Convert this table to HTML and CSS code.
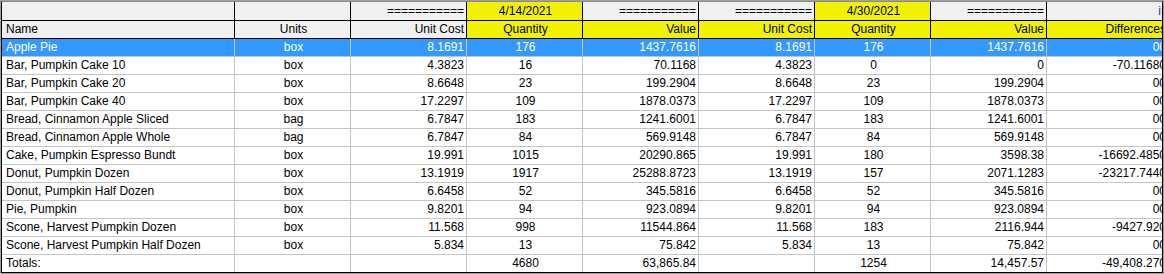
FILE: index.html
```html
<!DOCTYPE html>
<html>
<head>
<meta charset="utf-8">
<link rel="stylesheet" href="styles.css">
</head>
<body>
<div class="frame">
<div class="inner">
  <div class="row head head1">
    <div class="cell"></div>
    <div class="cell"></div>
    <div class="cell r">===========</div>
    <div class="cell m y">4/14/2021</div>
    <div class="cell r">===========</div>
    <div class="cell r">===========</div>
    <div class="cell m y">4/30/2021</div>
    <div class="cell r">===========</div>
    <div class="cell r dh">i</div>
  </div>
  <div class="row head">
    <div class="cell">Name</div>
    <div class="cell m">Units</div>
    <div class="cell r">Unit Cost</div>
    <div class="cell m y">Quantity</div>
    <div class="cell r y">Value</div>
    <div class="cell r y">Unit Cost</div>
    <div class="cell m y">Quantity</div>
    <div class="cell r y">Value</div>
    <div class="cell r y">Differences</div>
  </div>
  <div class="row sel">
    <div class="cell">Apple Pie</div><div class="cell m">box</div><div class="cell r">8.1691</div><div class="cell m">176</div><div class="cell r">1437.7616</div><div class="cell r">8.1691</div><div class="cell m">176</div><div class="cell r">1437.7616</div><div class="cell r">00</div>
  </div>
  <div class="row">
    <div class="cell">Bar, Pumpkin Cake 10</div><div class="cell m">box</div><div class="cell r">4.3823</div><div class="cell m">16</div><div class="cell r">70.1168</div><div class="cell r">4.3823</div><div class="cell m">0</div><div class="cell r">0</div><div class="cell r">-70.11680</div>
  </div>
  <div class="row">
    <div class="cell">Bar, Pumpkin Cake 20</div><div class="cell m">box</div><div class="cell r">8.6648</div><div class="cell m">23</div><div class="cell r">199.2904</div><div class="cell r">8.6648</div><div class="cell m">23</div><div class="cell r">199.2904</div><div class="cell r">00</div>
  </div>
  <div class="row">
    <div class="cell">Bar, Pumpkin Cake 40</div><div class="cell m">box</div><div class="cell r">17.2297</div><div class="cell m">109</div><div class="cell r">1878.0373</div><div class="cell r">17.2297</div><div class="cell m">109</div><div class="cell r">1878.0373</div><div class="cell r">00</div>
  </div>
  <div class="row">
    <div class="cell">Bread, Cinnamon Apple Sliced</div><div class="cell m">bag</div><div class="cell r">6.7847</div><div class="cell m">183</div><div class="cell r">1241.6001</div><div class="cell r">6.7847</div><div class="cell m">183</div><div class="cell r">1241.6001</div><div class="cell r">00</div>
  </div>
  <div class="row">
    <div class="cell">Bread, Cinnamon Apple Whole</div><div class="cell m">bag</div><div class="cell r">6.7847</div><div class="cell m">84</div><div class="cell r">569.9148</div><div class="cell r">6.7847</div><div class="cell m">84</div><div class="cell r">569.9148</div><div class="cell r">00</div>
  </div>
  <div class="row">
    <div class="cell">Cake, Pumpkin Espresso Bundt</div><div class="cell m">box</div><div class="cell r">19.991</div><div class="cell m">1015</div><div class="cell r">20290.865</div><div class="cell r">19.991</div><div class="cell m">180</div><div class="cell r">3598.38</div><div class="cell r">-16692.4850</div>
  </div>
  <div class="row">
    <div class="cell">Donut, Pumpkin Dozen</div><div class="cell m">box</div><div class="cell r">13.1919</div><div class="cell m">1917</div><div class="cell r">25288.8723</div><div class="cell r">13.1919</div><div class="cell m">157</div><div class="cell r">2071.1283</div><div class="cell r">-23217.7440</div>
  </div>
  <div class="row">
    <div class="cell">Donut, Pumpkin Half Dozen</div><div class="cell m">box</div><div class="cell r">6.6458</div><div class="cell m">52</div><div class="cell r">345.5816</div><div class="cell r">6.6458</div><div class="cell m">52</div><div class="cell r">345.5816</div><div class="cell r">00</div>
  </div>
  <div class="row">
    <div class="cell">Pie, Pumpkin</div><div class="cell m">box</div><div class="cell r">9.8201</div><div class="cell m">94</div><div class="cell r">923.0894</div><div class="cell r">9.8201</div><div class="cell m">94</div><div class="cell r">923.0894</div><div class="cell r">00</div>
  </div>
  <div class="row">
    <div class="cell">Scone, Harvest Pumpkin Dozen</div><div class="cell m">box</div><div class="cell r">11.568</div><div class="cell m">998</div><div class="cell r">11544.864</div><div class="cell r">11.568</div><div class="cell m">183</div><div class="cell r">2116.944</div><div class="cell r">-9427.920</div>
  </div>
  <div class="row">
    <div class="cell">Scone, Harvest Pumpkin Half Dozen</div><div class="cell m">box</div><div class="cell r">5.834</div><div class="cell m">13</div><div class="cell r">75.842</div><div class="cell r">5.834</div><div class="cell m">13</div><div class="cell r">75.842</div><div class="cell r">00</div>
  </div>
  <div class="row tot">
    <div class="cell">Totals:</div><div class="cell"></div><div class="cell"></div><div class="cell m">4680</div><div class="cell r">63,865.84</div><div class="cell"></div><div class="cell m">1254</div><div class="cell r">14,457.57</div><div class="cell r">-49,408.270</div>
  </div>
</div>
</div>
</body>
</html>
```

FILE: styles.css
```css
html, body {
  margin: 0;
  padding: 0;
  background: #ffffff;
}

body {
  font-family: "Liberation Sans", Arial, sans-serif;
  font-size: 12px;
  color: #000000;
}

.frame {
  width: 1164px;
  height: 274px;
  box-sizing: border-box;
  border: 1px solid #a0a0a0;
}

.inner {
  height: 100%;
  box-sizing: border-box;
  border: 1px solid #000000;
  border-top-color: #8a8a8a;
  overflow: hidden;
  background: #ffffff;
}

.row {
  display: grid;
  grid-template-columns: 233px repeat(7, 116px) 122px;
  height: 18px;
  width: max-content;
}

.cell {
  box-sizing: border-box;
  border-right: 1px solid #c4c4c4;
  border-bottom: 1px solid #c4c4c4;
  padding: 0 2px 0 4px;
  line-height: 17px;
  white-space: nowrap;
  overflow: hidden;
}

.r { text-align: right; }
.m { text-align: center; }

.head .cell {
  background: #f0f0f0;
  border-color: #000000;
}

.head .cell.y {
  background: #f2f200;
}

.head1 {
  height: 19px;
}

.head1 .cell {
  line-height: 18px;
}

.dh {
  color: #3a3a96;
  padding-right: 7px;
}

.sel .cell {
  background: #3399ff;
  color: #ffffff;
}

.tot {
  height: 17px;
}

.tot .cell {
  border-bottom: 0;
}
```
